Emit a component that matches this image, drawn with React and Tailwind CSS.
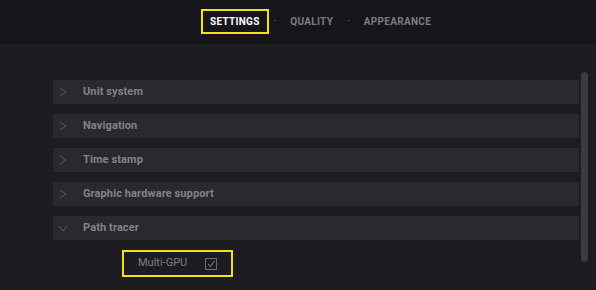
import { useState } from 'react'

const sections = [
  { title: 'Unit system', open: false },
  { title: 'Navigation', open: false },
  { title: 'Time stamp', open: false },
  { title: 'Graphic hardware support', open: false },
  { title: 'Path tracer', open: true },
]

function Chevron({ open }) {
  return open ? (
    <svg width="10" height="10" viewBox="0 0 10 10" className="text-[#5c5c61]">
      <path d="M1 3 L5 8 L9 3" fill="none" stroke="currentColor" strokeWidth="1" />
    </svg>
  ) : (
    <svg width="10" height="10" viewBox="0 0 10 10" className="text-[#5c5c61]">
      <path d="M2 1 L8 5 L2 9" fill="none" stroke="currentColor" strokeWidth="1" />
    </svg>
  )
}

export default function App() {
  const [tab] = useState('SETTINGS')
  const [multiGpu, setMultiGpu] = useState(true)
  const tabs = ['SETTINGS', 'QUALITY', 'APPEARANCE']

  return (
    <div className="w-[596px] h-[290px] bg-[#1d1d21] overflow-hidden flex flex-col" style={{ fontFamily: 'Roboto, "Liberation Sans", sans-serif' }}>
      <div className="h-[44px] bg-[#16161a] flex items-center justify-center pl-[45px] pb-[2px]">
        {tabs.map((t, i) => (
          <div key={t} className="flex items-center">
            {i > 0 && <span className="text-[#76767a] text-[10px] mx-[5px]">·</span>}
            <div className={`h-[25px] flex items-center px-[7px] text-[10px] font-bold tracking-[0.03em] ${t === tab ? 'border-2 border-[#f2e21c] text-white' : 'border-2 border-transparent text-[#7c7c80]'}`}>
              {t}
            </div>
          </div>
        ))}
      </div>
      <div className="flex-1 flex pl-[53px] pr-[8px] pt-[28px]">
        <div className="flex-1 flex flex-col gap-[10px] pt-[8px]">
          {sections.map((s) => (
            <div key={s.title} className="flex flex-col">
              <div className="h-[24px] bg-[#2a2a2e] flex items-center pl-[5px]">
                <Chevron open={s.open} />
                <span className="ml-[15px] text-[11px] font-bold text-[#838387] tracking-[0.01em]">{s.title}</span>
              </div>
              {s.open && (
                <div className="pl-[69px] pt-[10px]">
                  <div className="w-[111px] h-[27px] border-2 border-[#f2e21c] flex items-center pl-[14px] pr-[14px] justify-between">
                    <span className="text-[11px] text-[#7e7e82]">Multi-GPU</span>
                    <button onClick={() => setMultiGpu(!multiGpu)} className="w-[12px] h-[12px] border border-[#6e6e72] flex items-center justify-center">
                      {multiGpu && (
                        <svg width="10" height="10" viewBox="0 0 10 10">
                          <path d="M2 5 L4.2 7.5 L8.5 2" fill="none" stroke="#8a8a8e" strokeWidth="1" />
                        </svg>
                      )}
                    </button>
                  </div>
                </div>
              )}
            </div>
          ))}
        </div>
        <div className="w-[7px] ml-[2px] h-[190px] rounded-full bg-[#3b3b41]" />
      </div>
    </div>
  )
}
